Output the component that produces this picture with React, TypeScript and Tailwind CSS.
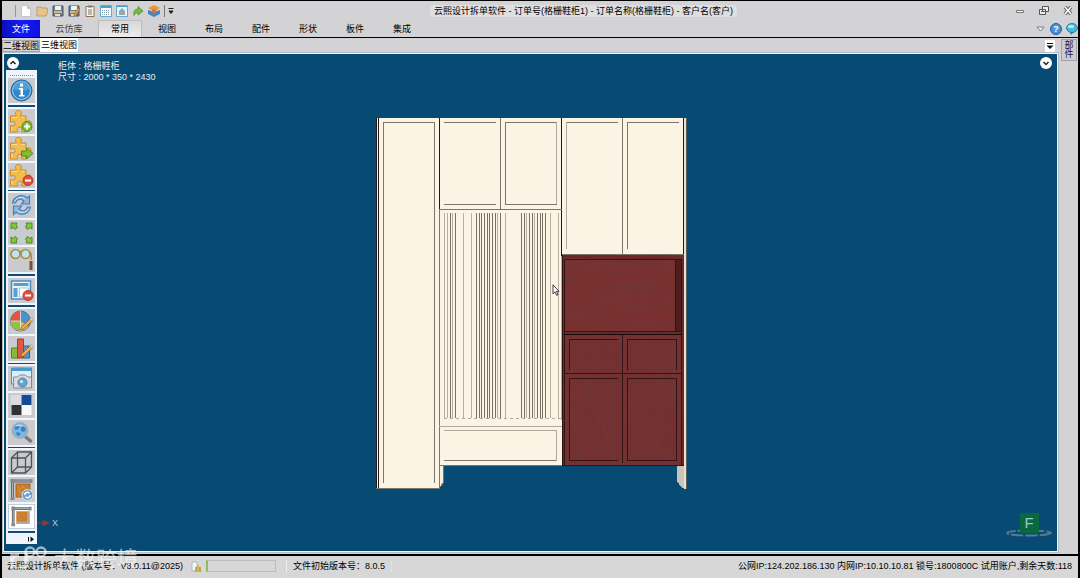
import React from "react";

type IconProps = { children: React.ReactNode };

const Tool = ({ children }: IconProps) => (
  <svg viewBox="0 0 26 25" className="block h-full w-full" aria-hidden="true">{children}</svg>
);
const Small = ({ children }: IconProps) => (
  <svg viewBox="0 0 12 12" className="block h-3 w-3" aria-hidden="true">{children}</svg>
);

const Puzzle = () => (
  <g>
    <path
      d="M2 7h5.500c.8-1-.8-1.800-.6-3.400C7.200 2 8.500 1.500 10 1.500s3 .8 3 2.400S11.500 6 12 7h5.500v5.500c1.500.4 2-1 3.800-.6s2 4-.2 4.300-2.200-1-3.600-.5V23H13c-.8-1.500 1-2 .4-3.600s-4.300-1.700-4.600.2 1.200 2.100.4 3.400H2v-6.500c1.400-.5 1.800.8 3.500.3s1.700-3.800 0-4.200-2 .9-3.500.4z"
      fill="#f2bd50" stroke="#c98a25" strokeWidth="1"
    />
    <path d="M3 8.500h5.500M13 8.500h3M3.500 18v3.500" stroke="#fbdd94" />
  </g>
);

const Pencil = () => (
  <g>
    <path d="M24 12 15 20l-3 1 1-3 8.500-8z" fill="#f3b04b" stroke="#8a5a35" strokeWidth=".8" />
    <path d="m21 10 2.500 2.500L25 11l-2.400-2.300z" fill="#dcdfe8" stroke="#777" strokeWidth=".5" />
  </g>
);

const Minus = () => (
  <g>
    <circle cx="19.500" cy="17.500" r="5" fill="#e2513d" stroke="#b93428" />
    <path d="M16.500 17.500h6" stroke="#fff" strokeWidth="2" />
  </g>
);

const Frame = ({ light = false }: { light?: boolean }) => (
  <g>
    <rect x="7.500" y="7" width="14" height="13" fill="#cb7d27" stroke={light ? "#e0a27b" : "#a9662c"} />
    <path d="m9 10 3 2M13 9l4 3M10 14l3 2" stroke="#dd9a4b" strokeWidth="1" />
    {light && <path d="M20 7v12H8" fill="none" stroke="#a7aab0" strokeWidth="2" />}
    <path d="M4 2v20M4 4h19" stroke="#63676c" strokeWidth="3" />
    <path d="M4 4v17M5 4h17" stroke="#b4b9bd" strokeWidth="1" />
    <path d="M2 2h4v4H2zM21 2h3v4h-3zM2 20h4v3H2z" fill="#858a90" />
  </g>
);

const icons = {
  info: (
    <Tool>
      <circle cx="13" cy="12.500" r="10.500" fill="#2f86c8" stroke="#1f639e" />
      <circle cx="13" cy="12.500" r="9" fill="none" stroke="#a5d0ee" />
      <path d="M4.500 11a8.500 8.500 0 0 1 17 0q-8 3-17 0" fill="#62acdf" opacity=".65" />
      <path d="M11.500 5.500h3v3h-3zM10.500 10h4v7H16v1.500h-5.500V17H12v-5.500h-1.500z" fill="#fff" />
    </Tool>
  ),
  puzzleAdd: (
    <Tool>
      <Puzzle />
      <circle cx="18.500" cy="17.500" r="5" fill="#7cbd32" stroke="#4b8a1e" />
      <path d="M15.500 17.500h6M18.500 14.500v6" stroke="#fff" strokeWidth="2" />
    </Tool>
  ),
  puzzleGo: (
    <Tool>
      <Puzzle />
      <path d="M13 15h5v-3l6.500 5.500L18 23v-3h-5z" fill="#7fbe2e" stroke="#4f8c20" />
    </Tool>
  ),
  puzzleRemove: <Tool><Puzzle /><Minus /></Tool>,
  refresh: (
    <Tool>
      <path d="M4 10C5 4 13 0 18.500 5L21 3v8h-8l2.500-3C12 5 8 6 7 10zM22 14c-1 6-9 10-14.500 5L5 21.500V13h8l-2.500 3c3.500 3 7.500 2 8.500-2z" fill="#8bb9e2" stroke="#4c7fb4" strokeWidth="1.200" />
      <path d="M6.500 8C9 3.500 14 3.500 17 6M20 16c-3 4-8 4-11 2" fill="none" stroke="#d4e7f7" />
    </Tool>
  ),
  expand: (
    <Tool>
      <path d="M2.500 3h6L7.500 5 9 7 7 9.500 4.500 7.500 2.500 9zM23.500 3h-6l1 2L17 7l2 2.500 2.500-2 2 1.500zM2.500 23h6l-1-2L9 19l-2-2.500-2.500 2-2-1.500zM23.500 23h-6l1-2-1.500-2 2-2.500 2.500 2 2-1.500z" fill="#84c73a" stroke="#4c8a22" />
    </Tool>
  ),
  glasses: (
    <Tool>
      <circle cx="7" cy="7" r="4.500" fill="#bfe3f2" stroke="#b18a3a" strokeWidth="1.700" />
      <circle cx="17" cy="7" r="4.500" fill="#bfe3f2" stroke="#b18a3a" strokeWidth="1.700" />
      <path d="M11 5q1-1 2 0M20.500 4q3 2 2 9" fill="none" stroke="#b18a3a" strokeWidth="1.500" />
      <path d="M22.500 14v9" stroke="#80512e" strokeWidth="3" />
    </Tool>
  ),
  tableRemove: (
    <Tool>
      <path d="M3 3h19v18H3z" fill="#e9f3fa" stroke="#4d8abc" strokeWidth="1.500" />
      <path d="M5 5h15v3H5zM5 10h4v9H5z" fill="#5c9dcb" />
      <path d="M11 10h9v9h-9z" fill="#fff" stroke="#a6c7dd" />
      <Minus />
    </Tool>
  ),
  pie: (
    <Tool>
      <circle cx="12" cy="12" r="10" fill="#4795cf" stroke="#557080" />
      <path d="M12 12V2a10 10 0 0 0-10 10z" fill="#e25440" />
      <path d="M12 12H2a10 10 0 0 0 10 10z" fill="#8fc441" />
      <path d="M12 12v10a10 10 0 0 0 8-5z" fill="#f0b541" />
      <path d="M12 2v20M2 12h10" stroke="#e8eaed" strokeWidth=".8" />
      <Pencil />
    </Tool>
  ),
  bars: (
    <Tool>
      <path d="M3 12h7v10H3z" fill="#83b93c" stroke="#55812a" />
      <path d="M15 10h6v12h-6z" fill="#5396ca" stroke="#35668f" />
      <path d="M9 3h6v19H9z" fill="#df5745" stroke="#a83a30" />
      <Pencil />
    </Tool>
  ),
  camera: (
    <Tool>
      <path d="M3 2h20v16H3z" fill="#dceefa" stroke="#4a8fc2" />
      <path d="M3 2h20v3H3z" fill="#4b98cf" />
      <path d="M5 11h4l2-2h6l2 2h4v11H5z" fill="#d7dadf" stroke="#858b93" />
      <circle cx="14" cy="16.500" r="4.500" fill="#5ca7dc" stroke="#667b8f" />
      <circle cx="13" cy="15.500" r="1.500" fill="#d4efff" />
    </Tool>
  ),
  checker: (
    <Tool>
      <path d="M3 2h20v20H3z" fill="#f9f9f9" />
      <path d="M3 2h10v10H3z" fill="#dcdcdc" />
      <path d="M13 2h10v10H13z" fill="#154b94" />
      <path d="M3 12h10v10H3z" fill="#303236" />
    </Tool>
  ),
  zoom: (
    <Tool>
      <path d="m16 16 6 5" stroke="#777a7e" strokeWidth="3.500" strokeLinecap="round" />
      <circle cx="11.500" cy="10.500" r="7.500" fill="#79b7e7" stroke="#a0adb9" strokeWidth="2" />
      <path d="M6 8q2-3 5-2l-1 3-3 1zm7-2 4 2v3l-3 1-2-2zM8 12l4 1-1 3-3-1z" fill="#3a80c3" />
      <path d="M8 6q3-2 6 0" stroke="#e7f5ff" fill="none" />
    </Tool>
  ),
  cube: (
    <Tool>
      <path d="M3 8h14v15H3zM9 2h14v15H9zM3 8l6-6M17 8l6-6M3 23l6-6M17 23l6-6" fill="none" stroke="#505356" strokeWidth="1.300" />
    </Tool>
  ),
  frameSync: (
    <Tool>
      <Frame />
      <circle cx="19" cy="18" r="5.500" fill="#6e9ed0" stroke="#dce8f5" />
      <path d="M16 18q1-4 5-2M22 18q-1 4-5 2" fill="none" stroke="#fff" strokeWidth="1.500" />
    </Tool>
  ),
  frame: <Tool><Frame light /></Tool>,
};

type ToolItem = { label: string; icon: keyof typeof icons; active?: boolean };

const thick = "mt-[2px] border-t-2 pt-[2px]";
const thin = "mt-[2px] border-t pt-[2px]";

const toolGroups: { rule: string; items: ToolItem[] }[] = [
  { rule: "", items: [{ label: "信息", icon: "info" }] },
  { rule: thick, items: [{ label: "添加", icon: "puzzleAdd" }, { label: "移动", icon: "puzzleGo" }, { label: "删除", icon: "puzzleRemove" }] },
  { rule: thin, items: [{ label: "刷新", icon: "refresh" }, { label: "全屏", icon: "expand" }, { label: "查看", icon: "glasses" }] },
  { rule: thick, items: [{ label: "移除表格", icon: "tableRemove" }] },
  { rule: thick, items: [{ label: "颜色", icon: "pie" }, { label: "统计", icon: "bars" }] },
  { rule: thin, items: [{ label: "截图", icon: "camera" }, { label: "材质", icon: "checker" }, { label: "缩放", icon: "zoom" }] },
  { rule: thin, items: [{ label: "线框", icon: "cube" }, { label: "同步", icon: "frameSync" }, { label: "实体", icon: "frame", active: true }] },
];

const floppy = (
  <g>
    <path d="M1 1h10v10H1z" fill="#6f8096" stroke="#45556b" />
    <path d="M3 1h6v4H3z" fill="#eef3f8" />
    <path d="M2 6h8v2H2z" fill="#e3b66c" />
    <path d="M3 9h5v2H3z" fill="#dce0e6" />
  </g>
);

const quick: { label: string; art: React.ReactNode }[] = [
  { label: "新建", art: <path d="M1.500.5h6l3 3v8h-9zM7.500.5v3h3" fill="#fff" stroke="#b8bbc0" strokeWidth=".8" /> },
  { label: "打开", art: <path d="M1 10V2h4l1 1h5v2l1 0-2 6H1z" fill="#e6c48c" stroke="#b99256" strokeWidth=".8" /> },
  { label: "保存", art: floppy },
  { label: "另存", art: <g>{floppy}<path d="m6 9 4-6 2 1-4 6-2 1z" fill="#efa83e" stroke="#7d5b29" strokeWidth=".6" /></g> },
  { label: "清单", art: <g><path d="M2 1.500h8v10H2z" fill="#f9f6ee" stroke="#91714d" /><path d="M4 .5h4v2H4z" fill="#777" /><path d="M4 5h4M4 7h4M4 9h4" stroke="#777" /></g> },
  { label: "表格", art: <g><path d="M.5.5h11v11H.5z" fill="#f7fbff" stroke="#64a9d4" /><path d="M1 2h10" stroke="#46a0d8" strokeWidth="2" /><path d="M2 5.500h8M2 7.500h8M2 9.500h8" stroke="#879bab" strokeDasharray="1 1" /></g> },
  { label: "视图", art: <g><path d="M.5.5h11v11H.5z" fill="#e9f5fc" stroke="#64a9d4" /><path d="M1 1.500h10" stroke="#46a0d8" /><path d="m6 3 3 3v4H3V6z" fill="#8aa9bf" /><path d="M5 6h3v3H5z" fill="#e79545" /></g> },
  { label: "导出", art: <path d="M2 10.500Q1 4 6 4V1.500L11 6l-5 4V7.500Q3 7.500 2 10.500z" fill="#76b844" stroke="#4d8a2b" strokeWidth=".7" /> },
  { label: "模型", art: <g><path d="m0 5 6 2 6-2v4l-6 3-6-3z" fill="#4685bf" /><path d="m6 0 6 3-3 2H3L0 3z" fill="#ef963c" /><path d="M4 4h4v3l-2 2-2-2z" fill="#dc7525" /></g> },
];

const menuTabs = ["常用", "视图", "布局", "配件", "形状", "板件", "集成"];

const slats = [
  [444, 0], [447, 0], [450, 1], [452, 0], [455, 1], [463, 0], [471, 0], [476, 1], [479, 1], [481, 1], [484, 1],
  [487, 1], [489, 1], [492, 1], [495, 1], [497, 0], [500, 1], [505, 0], [521, 1], [524, 1], [526, 0], [529, 1],
  [532, 1], [534, 0], [537, 1], [540, 1], [542, 1], [545, 1], [550, 0], [558, 0],
];

function Cabinet() {
  return (
    <svg viewBox="375 117 312 372" className="block h-[372px] w-[312px]" role="img" aria-label="格栅鞋柜" shapeRendering="crispEdges">
      <defs>
        <filter id="grainH" x="0" y="0" width="100%" height="100%">
          <feTurbulence type="fractalNoise" baseFrequency="0.015 0.3" numOctaves="3" seed="4" />
          <feColorMatrix values="0 0 0 0 .15  0 0 0 0 .04  0 0 0 0 .04  2.200 0 0 0 -.85" />
        </filter>
        <filter id="grainV" x="0" y="0" width="100%" height="100%">
          <feTurbulence type="fractalNoise" baseFrequency="0.25 0.02" numOctaves="3" seed="9" />
          <feColorMatrix values="0 0 0 0 .15  0 0 0 0 .04  0 0 0 0 .04  2.200 0 0 0 -.85" />
        </filter>
      </defs>
      <path d="M440 465h3v17l-3 5z" fill="#f5eddd" />
      <path d="M677 465h7v23h-2l-5-7z" fill="#c8c5b8" />
      <path d="M376 118h64v371h-64z" fill="#fbf3e3" />
      <path d="M440 118h244v348H440z" fill="#fbf3e3" />
      <path d="M684 118h3v371h-3z" fill="#e5e2d5" />
      <g fill="none" stroke="#1c1b18">
        <path d="M376.500 118v371M378.500 118v371M439.500 118v92M561.500 118v138M683.500 118v348M439.500 426v40" />
        <path d="M686.500 118v371" stroke="#55625f" />
      </g>
      <g fill="none" stroke="#7b756a">
        <path d="M383.500 483V122.500h51V483M439.500 209v279M500.500 118v91M439 209.500h123M376 488.500h64" />
        <path d="M444 122.500h52M444 204.500h52M505.500 122v82.500h51M505 122.500h52" />
        <path d="M566 122.500h52M622.500 118v137M627.500 249V122.500H679M562 254.500h122" />
        <path d="M444 460.500h113M439 465.500h123M443.500 466v16l-3 5" />
      </g>
      <g fill="none" stroke="#b0aa9c">
        <path d="M556.500 122v82M566.500 122v127M439 426.500h123M444 430.500h112.500v30M561.500 256v164" />
        <path d="M444 418.500h117" strokeDasharray="3 3" />
      </g>
      {slats.map(([x, dark]) => (
        <path key={x} d={`M${x}.5 213v205`} stroke={dark ? "#777267" : "#b5af9f"} />
      ))}
      <path d="M562 255h122v211H562z" fill="#6c2526" />
      <path d="M565 259h111v73H565z" fill="#7a302f" />
      <path d="M565 335h116v130H565z" fill="#753030" />
      <rect x="562" y="255" width="122" height="79" filter="url(#grainH)" opacity=".75" />
      <rect x="562" y="335" width="122" height="131" filter="url(#grainV)" opacity=".75" />
      <path d="M676 259h6v73h-6z" fill="#4e1d1e" />
      <g fill="none" stroke="#351315">
        <path d="M562.500 255v211M564.500 259v207M564 259.500h118M675.500 259v72M681.500 259v207M562 465.500h122" />
        <path d="M622.500 334v129M564 373.500h118M564 331.500h118" />
        <path d="M569.500 370v-30.500H618M627.500 370v-30.500h49V370M569.500 460v-81.500H618M569 460.500h49M627.500 460.500v-82h49v82z" />
        <path d="M564 334.500h118" stroke="#180b0b" />
      </g>
    </svg>
  );
}

export default function App() {
  return (
    <div className="flex min-h-screen flex-col overflow-hidden border-l-2 border-r-2 border-t border-black bg-[#d3d3d5] font-['Liberation_Sans','Noto_Sans_CJK_SC',sans-serif] text-[9px] leading-3 text-black">
      <header>
        <div className="flex h-[19px] items-center justify-between">
          <div className="flex items-center gap-1 pl-[13px]">
            <span className="h-3 w-px bg-[#96969a]" />
            {quick.map((q) => (
              <button key={q.label} aria-label={q.label} className="block h-3 w-3"><Small>{q.art}</Small></button>
            ))}
            <div className="flex items-center">
              <span className="h-3 w-px bg-[#77777a]" />
              <button aria-label="自定义快速访问" className="h-3 w-3">
                <Small><path d="M3.500 3.500h5M4 6h4L6 8.500z" fill="#222" stroke="#222" /></Small>
              </button>
            </div>
          </div>
          <h1 className="rounded bg-[#dfdfe0] px-1 font-normal">云熙设计拆单软件 - 订单号(格栅鞋柜1) - 订单名称(格栅鞋柜) - 客户名(客户)</h1>
          <div className="flex w-[88px] items-center justify-end gap-3 pr-1">
            <button aria-label="最小化"><Small><path d="M2.500 5.500h7v2h-7z" fill="#fff" stroke="#777" /></Small></button>
            <button aria-label="还原"><Small><path d="M4.500 1.500h6v5h-6zM1.500 4.500h6v5h-6z" fill="#eee" stroke="#555" /><path d="M3 6.500h3" stroke="#555" /></Small></button>
            <button aria-label="关闭"><Small><path d="m3 2 6 7M9 2 3 9" stroke="#666" strokeWidth="3.500" /><path d="m3 2 6 7M9 2 3 9" stroke="#fff" strokeWidth="1.500" /></Small></button>
          </div>
        </div>
        <nav className="flex h-[18px] items-stretch border-b border-black">
          <button className="w-[38px] bg-gradient-to-r from-[#0a10b8] via-[#1818ff] to-[#1010e0] text-white">文件</button>
          <button className="w-[58px] text-[#444]">云仿库</button>
          <div className="flex gap-[3px]">
            {menuTabs.map((t, i) => (
              <button key={t} className={i === 0 ? "w-11 border border-b-0 border-[#bebebe] bg-gradient-to-b from-[#d8d8d8] to-[#ececec]" : "w-11"}>{t}</button>
            ))}
          </div>
          <div className="ml-auto flex items-center gap-1">
            <button aria-label="展开功能区"><Small><path d="M3 4h7L6.500 8z" fill="#fff" stroke="#777" /></Small></button>
            <button aria-label="帮助" className="flex h-3 w-3 items-center justify-center rounded-full border border-[#245c9e] bg-[#4c91d4] text-[9px] font-bold text-white">?</button>
            <button aria-label="消息"><Small><ellipse cx="6" cy="5" rx="5.500" ry="4.500" fill="#4bb8d8" stroke="#2582a8" /><path d="m4 9 1 3 3-3z" fill="#2582a8" /><ellipse cx="5" cy="3.500" rx="3" ry="1.500" fill="#b5edf8" /></Small></button>
          </div>
        </nav>
      </header>

      <div className="flex flex-1">
        <div className="flex min-w-0 flex-1 flex-col">
          <div className="flex h-[14px] items-end">
            <button className="h-3 w-[38px] border border-[#a5a5a8] leading-[10px] whitespace-nowrap">二维视图</button>
            <button className="h-[14px] w-[38px] bg-white whitespace-nowrap">三维视图</button>
            <button aria-label="视图列表" className="mr-1 ml-auto h-3 w-[10px] bg-white">
              <svg viewBox="0 0 10 12" className="h-3 w-[10px]" aria-hidden="true"><path d="M2 3h6v1H2zM1.500 5.500h7L5 9z" fill="#111" /></svg>
            </button>
          </div>

          <main className="relative flex flex-1 items-start border-2 border-[#f2f2f2] bg-[#074a73] outline -outline-offset-1 outline-[#b5bcc2]">
            <div className="flex flex-col">
              <button aria-label="收起工具栏" className="mt-[3px] ml-[3px] flex h-3 w-3 items-center justify-center rounded-full bg-white">
                <svg viewBox="0 0 12 12" className="h-3 w-3" aria-hidden="true"><path d="m3.500 7 2.500-2.500L8.500 7" fill="none" stroke="#222" strokeWidth="1.500" /></svg>
              </button>
              <aside aria-label="工具栏" className="mt-px ml-[2px] w-[31px] bg-[#eef5fc] px-[2px]">
                <div className="mx-[2px] mb-[2px] h-[6px] border-b border-dotted border-[#808890]" />
                {toolGroups.map((g, i) => (
                  <div key={i} className={`flex flex-col gap-[2px] border-[#164a72] ${g.rule}`}>
                    {g.items.map((t) => (
                      <button key={t.label} aria-label={t.label} className={t.active ? "h-[25px] w-full border border-[#c3cbd5] bg-white" : "h-[25px] w-full bg-[#c9cbcf]"}>
                        {icons[t.icon]}
                      </button>
                    ))}
                  </div>
                ))}
                <div className="mt-[2px] border-t-2 border-[#164a72]" />
                <button aria-label="更多工具" className="ml-auto flex h-[11px] w-2 items-center">
                  <svg viewBox="0 0 8 8" className="h-2 w-2" aria-hidden="true"><path d="M1.500 2v4.500" stroke="#111" /><path d="M3.500 1.500v5.500L7 4.250z" fill="#111" /></svg>
                </button>
              </aside>
            </div>
            <div className="mt-[7px] ml-[21px] leading-[11px] text-[#e5edf2]">
              <p>柜体 : 格栅鞋柜</p>
              <p>尺寸 : 2000 * 350 * 2430</p>
            </div>

            <div className="absolute top-[63px] left-1/2 -translate-x-1/2"><Cabinet /></div>

            <svg viewBox="0 0 8 12" className="absolute top-[230px] left-[52%] h-3 w-2" aria-hidden="true">
              <path d="M1 .8v9l2-2 1.500 3.500 1.500-.7-1.500-3.300H7z" fill="#fff" stroke="#111" strokeWidth=".8" />
            </svg>
            <div className="absolute bottom-[22px] left-[33px] flex items-center gap-[2px] text-[#bdc9d0]">
              <svg viewBox="0 0 13 6" className="h-[6px] w-[13px]" aria-hidden="true"><path d="M0 3h7M6 .5 12 3 6 5.500z" fill="#8b3c3d" stroke="#8b3c3d" /></svg>
              <span>X</span>
            </div>
            <button aria-label="展开面板" className="absolute top-[3px] right-[5px] h-3 w-3 rounded-full bg-white">
              <svg viewBox="0 0 12 12" className="h-3 w-3" aria-hidden="true"><path d="m3.500 5 2.500 2.500L8.500 5" fill="none" stroke="#222" strokeWidth="1.500" /></svg>
            </button>
            <div className="absolute right-[4px] bottom-[14px] flex w-12 justify-center">
              <svg viewBox="0 0 48 8" className="absolute bottom-0 left-0 h-2 w-12" aria-hidden="true">
                <ellipse cx="24" cy="4" rx="22" ry="2.500" fill="none" stroke="#557b91" strokeWidth="2" strokeDasharray="12 2" />
              </svg>
              <span className="relative mb-1 flex h-5 w-[19px] items-center justify-center bg-[#09683f] text-[15px] text-[#9bc4d0]">F</span>
            </div>
          </main>
        </div>
        <aside className="flex w-[19px] items-start justify-end pt-px pr-px">
          <button className="h-[22px] w-4 border border-[#a4a4a8] bg-[#cbcbd0] px-[2px] leading-[9px] text-[#20104a]">部件</button>
        </aside>
      </div>

      <footer className="relative mt-px flex h-6 items-center border-t-2 border-black bg-[#d7d7d8] pb-[2px] whitespace-nowrap">
        <span className="w-[180px] pl-[5px]">云熙设计拆单软件 (版本号：V8.0.11@2025)</span>
        <span className="flex w-[105px] items-center gap-1 border-r border-[#eee] pl-2">
          <Small><path d="M2 2h5v9H2z" fill="#f6f6f0" stroke="#aaa" strokeWidth=".8" /><path d="M5 7h2v5H5z" fill="#9cbd55" /><path d="M7 5h2v7H7z" fill="#e0b145" /><path d="M9 7h2v5H9z" fill="#c9a34a" /></Small>
          <span role="progressbar" aria-label="进度" aria-valuenow={0} className="h-3 w-[70px] border border-l-2 border-[#bcbcbe] border-l-[#8cbd62]" />
        </span>
        <span className="border-r border-[#e2e2e2] px-[6px]">文件初始版本号：8.0.5</span>
        <span className="ml-auto pr-[6px]">公网IP:124.202.186.130 内网IP:10.10.10.81 锁号:1800800C 试用账户,剩余天数:118</span>
        <div className="pointer-events-none absolute bottom-[7px] left-[6px] flex items-end gap-[6px] text-[21px] leading-6 text-white/60" aria-hidden="true">
          <svg viewBox="0 0 40 26" className="h-[26px] w-10"><g fill="none" stroke="#fff" strokeOpacity=".6"><path d="M4 24V9M4 15q1-5 7-5M18 18V8" strokeWidth="3.500" /><circle cx="22" cy="7" r="4.500" strokeWidth="2.500" /><circle cx="33" cy="7" r="4.500" strokeWidth="2.500" /><path d="M11 20q4 5 9 0" strokeWidth="3" /></g></svg>
          <span>大数跨境</span>
        </div>
      </footer>
    </div>
  );
}
